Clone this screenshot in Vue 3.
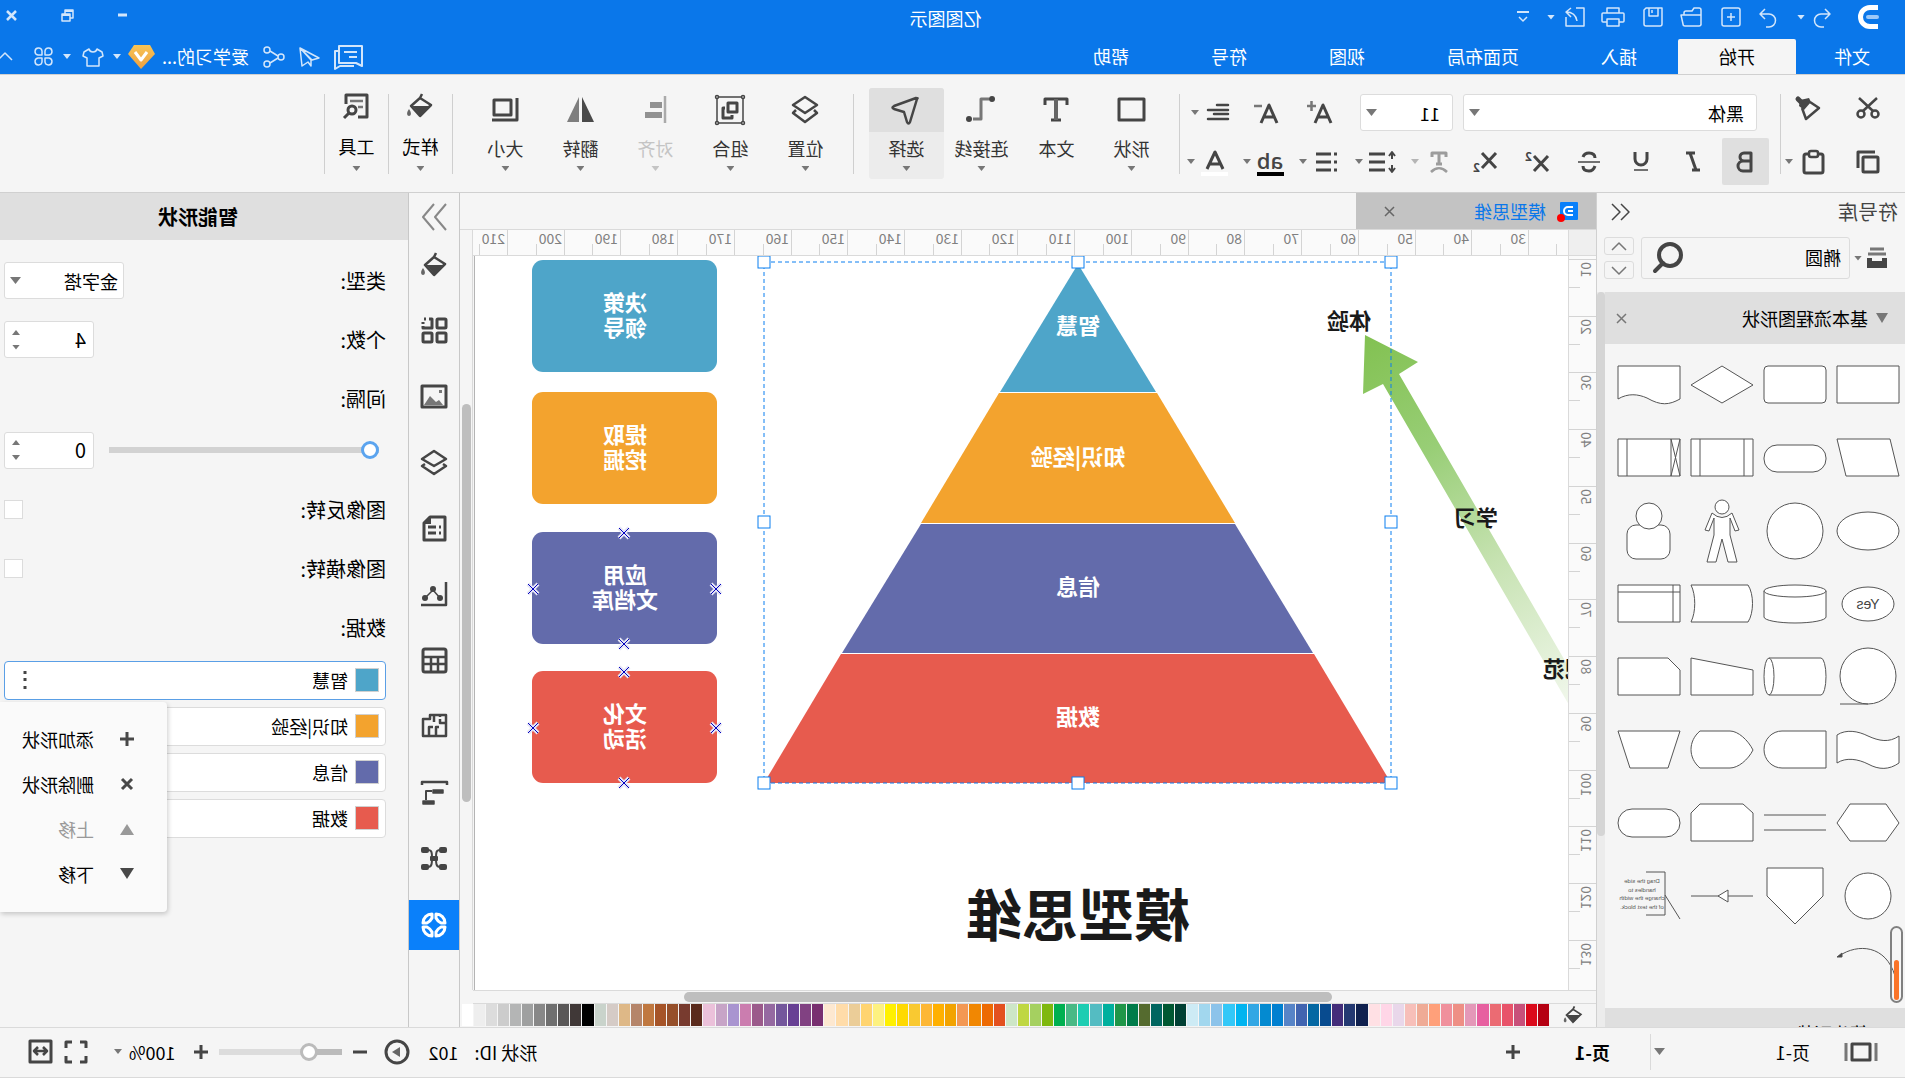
<script setup>
import { h, ref } from 'vue'

const art = {
  logo: '<path d="M2 2.500H10A9.500 9.500 0 0 1 10 21.500H2" stroke="#fff" stroke-width="5"/><path d="M3 12H12" stroke="#9cc8f8" stroke-width="4" stroke-linecap="round"/>',
  undo: '<path d="M8 3L3 8L8 13M3 8H12A6 6 0 0 1 12 21H9"/>',
  redo: '<path d="M14 3L19 8L14 13M19 8H10A6 6 0 0 0 10 21H13"/>',
  newDoc: '<rect x="2" y="2" width="18" height="18" rx="2"/><path d="M11 7V15M7 11H15"/>',
  folder: '<path d="M2 19V4A2 2 0 0 1 4 2H9L11 5H17A2 2 0 0 1 19 7V9M2 9H22L20 18A2 2 0 0 1 18 20H4A2 2 0 0 1 2 18V9"/>',
  save: '<path d="M2 2H18L20 4V18A2 2 0 0 1 18 20H4A2 2 0 0 1 2 18ZM6 2V10H15V2M12 4V7"/>',
  print: '<path d="M6 7V2H18V7M6 16H2A1 1 0 0 1 1 15V8A1 1 0 0 1 2 7H22A1 1 0 0 1 23 8V15A1 1 0 0 1 22 16H18M6 13H18V20H6Z"/>',
  share: '<path d="M10 2H2V20H20V11M15 2L20 6L15 11M20 6C14 6 10 9 9 15"/>',
  more: '<path d="M2 3H14" stroke-width="2"/><path d="M4 8L8 12L12 8"/>',
  min: '<path d="M1 3H10" stroke-width="3"/>',
  restore: '<rect x="1" y="1" width="8" height="8"/><rect x="4" y="5" width="8" height="7" fill="#0a77ea"/><path d="M4 6H12M1 2H9" stroke-width="2"/>',
  close: '<path d="M2 2L11 11M11 2L2 11" stroke-width="2.500"/>',
  comment: '<path d="M2 2H25V19H8L2 22ZM7 8H20M7 13H15" stroke-width="2"/><path d="M25 7H29V25L24 22H10" stroke-width="2"/>',
  send: '<path d="M20 2L1 12L8 14ZM20 2L9 14V20L12 16L18 20Z"/>',
  nodes: '<circle cx="4" cy="11" r="3"/><circle cx="18" cy="4" r="3"/><circle cx="18" cy="18" r="3"/><path d="M7 10L15 5M7 12L15 17"/>',
  gem: '<path d="M5 0H21L27 9L14 24L0 9Z" fill="url(#gold)" stroke="none"/><defs><linearGradient id="gold" x1="0" y1="0" x2="0" y2="1"><stop offset="0" stop-color="#f8c455"/><stop offset="1" stop-color="#eda042"/></linearGradient></defs><path d="M8 7L14 15L20 7" stroke="#fff" stroke-width="3"/>',
  shirt: '<path d="M7 2L2 5L1 9L5 11V19H17V11L21 9L20 5L15 2C14 6 8 6 7 2Z"/>',
  clover: '<path d="M9 9H5A3.500 3.500 0 1 1 9 5ZM12 9V5A3.500 3.500 0 1 1 16 9ZM9 12V16A3.500 3.500 0 1 1 5 12ZM12 12H16A3.500 3.500 0 1 1 12 16Z"/>',
  up: '<path d="M1 9L8 2L15 9"/>',
  scissors: '<g stroke-width="2.500"><circle cx="6" cy="19" r="3.500"/><circle cx="20" cy="19" r="3.500"/><path d="M8 16L22 3M18 16L4 3"/></g>',
  painter: '<path d="M23 4L19 8" stroke-width="5" stroke-linecap="round"/><path d="M12 3L21 5L22 11L17 15L10 7Z" fill="currentColor" stroke="none"/><path d="M11 7L2 13L15 24L19 13" stroke-width="2.500"/>',
  copy: '<rect x="3" y="8" width="15" height="15" stroke-width="3" rx="1"/><path d="M6 3H23V19" stroke-width="3"/>',
  paste: '<rect x="3" y="5" width="19" height="19" rx="2" stroke-width="3"/><rect x="8" y="2" width="9" height="6" rx="2" stroke-width="2.500" fill="#f5f5f5"/>',
  aPlus: '<path d="M3 24L11 6L19 24M6 18H16" stroke-width="3"/><path d="M18 7H27M22.500 2V12" stroke="#777" stroke-width="2.500"/>',
  aMinus: '<path d="M3 24L11 6L19 24M6 18H16" stroke-width="3"/><path d="M18 7H26" stroke="#777" stroke-width="2.500"/>',
  align: '<path d="M4 5H15M4 10H24M4 14H18M4 19H24" stroke-width="2.500" stroke-linecap="round"/>',
  bold: '<path d="M7 4H14A4 4 0 0 1 14 12H7ZM7 12H15A4.500 4.500 0 0 1 15 22H7Z" stroke-width="3"/>',
  italic: '<path d="M11 4H20M6 21H14M16 4L10 21" stroke-width="3"/>',
  under: '<path d="M7 3V10A6 6 0 0 0 19 10V3" stroke-width="3"/><path d="M6 21H20" stroke-width="1.500"/>',
  strike: '<path d="M19 8C18 5 16 4 13 4C9 4 7 6 7 9M7 17C8 20 10 22 13 22C17 22 19 20 19 17" stroke-width="3"/><path d="M2 13H24"/>',
  sup: '<path d="M2 7L16 22M16 7L2 22" stroke-width="3"/><text x="18" y="12" font-size="12" font-weight="700" fill="currentColor" stroke="none">2</text>',
  sub: '<path d="M2 4L16 19M16 4L2 19" stroke-width="3"/><text x="18" y="23" font-size="12" font-weight="700" fill="currentColor" stroke="none">2</text>',
  textArc: '<path d="M5 8V4H19V8M12 4V15M9 15H15" stroke-width="3"/><path d="M4 23C9 18 15 18 20 23" stroke-width="2.500"/>',
  spacing: '<path d="M5 4V10M2 7L5 3L8 7M5 16V23M2 19L5 23L8 19" stroke-width="2"/><path d="M12 5H28M12 13H28M12 21H28" stroke-width="3"/>',
  bullets: '<path d="M2 5H5M2 13H5M2 21H5M8 5H23M8 13H23M8 21H23" stroke-width="3"/>',
  mark: '<text x="15" y="20" text-anchor="middle" font-size="22" font-weight="600" fill="currentColor" stroke="none" font-family="Open Sans">ab</text><path d="M1 25H28" stroke="#000" stroke-width="4"/>',
  color: '<path d="M6 20L14 3L22 20M9 15H19" stroke-width="3"/><path d="M1 25H28" stroke="#fff" stroke-width="4"/>',
  shape: '<rect x="2" y="4" width="25" height="21" stroke-width="3"/>',
  text: '<path d="M4 10V4H26V10M10 25H20" stroke-width="3"/><path d="M15 4V25" stroke-width="4" stroke="#666"/>',
  line: '<path d="M7 4H15V24H23" stroke-width="3" stroke="#777"/><circle cx="4" cy="4" r="3" fill="currentColor" stroke="none"/><circle cx="27" cy="24" r="3" fill="currentColor" stroke="none"/>',
  pick: '<path d="M4 4C3 3 3 3 5 3L27 11C29 12 29 13 27 14L17 17L14 27C13 29 12 29 11 27Z" stroke-width="2.500"/>',
  layers: '<path d="M15 2L27 10L15 18L3 10ZM6 15L3 18L15 27L27 18L24 15" stroke-width="2.500"/>',
  stack: '<path d="M14 2L26 10L14 17L2 10ZM5 15L2 17L14 25L26 17L23 15" stroke-width="2.500"/>',
  group: '<rect x="2" y="2" width="26" height="26" stroke-width="1.500"/><g fill="#f5f5f5" stroke-width="1.500"><circle cx="2" cy="2" r="1.500"/><circle cx="28" cy="2" r="1.500"/><circle cx="2" cy="28" r="1.500"/><circle cx="28" cy="28" r="1.500"/></g><rect x="8" y="8" width="9" height="9" stroke-width="3"/><path d="M20 13H22V23H13V20" stroke-width="3"/>',
  arrange: '<path d="M5 1V28" stroke-width="2.500" stroke="#aaa"/><path d="M8 7H20V13H8ZM8 17H25V23H8Z" fill="#919191" stroke="none"/>',
  flip: '<path d="M1 27L13 2V27Z" fill="#4a4a4a" stroke="none"/><path d="M16 2V27H28Z" fill="#7e7e7e" stroke="none"/>',
  size: '<rect x="9" y="5" width="17" height="15" stroke-width="3"/><path d="M3 3V25H28" stroke-width="3"/>',
  bucket: '<path d="M12 2L14 6M14 6L23 14L14 24L3 13Z" stroke-width="2.500"/><path d="M4 14H22L13 24Z" fill="currentColor" stroke="none"/><path d="M25 17C28 21 27 24 25 24S22 21 25 17" fill="#666" stroke="none"/>',
  tools: '<path d="M12 25H3V3H24V12" stroke-width="3"/><path d="M7 9H20M7 15H12" stroke-width="2.500" stroke="#777"/><circle cx="18" cy="18" r="4" stroke-width="3"/><path d="M21 21L26 26" stroke-width="3"/>',
  tiles: '<g stroke-width="3"><rect x="2" y="2" width="9" height="9" rx="1"/><rect x="2" y="16" width="9" height="9" rx="1"/><rect x="16" y="16" width="9" height="9" rx="1"/><path d="M19 2H16V11H25V9M25 5V7M22 2H24"/></g>',
  image: '<rect x="2" y="3" width="24" height="21" stroke-width="3"/><path d="M5 22L9 17L12 19L18 13L24 22Z" fill="#777" stroke="none"/><rect x="6" y="7" width="3" height="3" fill="#777" stroke="none"/>',
  doc: '<path d="M3 2H18L24 8V25H3Z" stroke-width="3"/><path d="M17 2V9H24Z" fill="currentColor" stroke="none"/><path d="M7 12H9M12 12H20M7 18H9M12 18H20" stroke-width="3"/>',
  chart: '<path d="M2 1V24H27" stroke-width="2.500"/><path d="M8 17L15 9L23 17" /><g fill="currentColor" stroke="none"><circle cx="8" cy="17" r="3"/><circle cx="15" cy="8" r="3"/><circle cx="23" cy="17" r="3"/></g>',
  table: '<rect x="2" y="2" width="23" height="23" rx="2" stroke-width="3"/><path d="M2 10H25M2 17H25M10 10V25M17 10V25" stroke-width="2.500"/>',
  plan: '<path d="M2 2H18V6H25V23H2ZM2 10H8V6M8 2V4M14 2V9M9 14H12V23M15 14H19V18M19 18V23" stroke-width="2.500"/>',
  gantt: '<path d="M1 6V3H26V6" stroke-width="2.500"/><path d="M5 11H15V14H5ZM14 22H25V25H14Z" fill="currentColor"/><path d="M16 12H22V21" stroke-width="2"/>',
  mind: '<g fill="currentColor" stroke="none"><rect x="1" y="2" width="8" height="6" rx="2"/><rect x="19" y="2" width="8" height="6" rx="2"/><rect x="1" y="19" width="8" height="6" rx="2"/><rect x="19" y="19" width="8" height="6" rx="2"/><rect x="10" y="11" width="8" height="5" rx="1"/></g><path d="M8 5C12 5 12 8 12 13S12 22 8 22M20 5C16 5 16 8 16 13S16 22 20 22" stroke-width="2"/>',
  wheel: '<g stroke="#fff" stroke-width="3"><path d="M12 3V7C11 9 9 11 7 12H3C3 7 7 3 12 3ZM16 3V7C17 9 19 11 21 12H25C25 7 21 3 16 3ZM12 25V21C11 19 9 17 7 16H3C3 21 7 25 12 25ZM16 25V21C17 19 19 17 21 16H25C25 21 21 25 16 25Z"/></g>',
  collapse: '<path d="M9 2L1 10L9 18M18 2L10 10L18 18" stroke-width="1.500"/>',
  expand: '<path d="M2 1L13 14L2 27M14 1L25 14L14 27" stroke-width="2"/>',
  library: '<path d="M1 12H6V15H16V12H21V22H1Z" fill="currentColor" stroke="none"/><path d="M2 8H20M4 3H18" stroke="#777" stroke-width="3"/>',
  find: '<circle cx="14" cy="14" r="11" stroke-width="4"/><path d="M21 22L29 30" stroke-width="4" stroke-linecap="round"/>',
  chevUp: '<path d="M2 10L9 3L16 10" stroke-width="1.500"/>',
  chevDown: '<path d="M2 3L9 10L16 3" stroke-width="1.500"/>',
  cross: '<path d="M1 1L10 10M10 1L1 10" stroke-width="1.500"/>',
  tabLogo: '<rect x="0" y="2" width="18" height="18" rx="1" fill="#0a80fa" stroke="none"/><path d="M5 7H10A4 4 0 0 1 10 15H5M5 11H10" stroke="#fff" stroke-width="2"/><circle cx="17" cy="18" r="4" fill="#f00" stroke="none"/>',
  add: '<path d="M8 1V15M1 8H15" stroke-width="3"/>',
  remove: '<path d="M1 8H15" stroke-width="3"/>',
  del: '<path d="M3 3L13 13M13 3L3 13" stroke-width="3"/>',
  triUp: '<path d="M8 3L15 14H1Z" fill="currentColor" stroke="none"/>',
  triDown: '<path d="M1 2H15L8 13Z" fill="currentColor" stroke="none"/>',
  dots: '<path d="M3 2V5M3 9V12M3 17V20" stroke-width="3"/>',
  pages: '<rect x="8" y="2" width="18" height="16" stroke-width="3"/><path d="M2 1V19M32 1V19" stroke="#777" stroke-width="3"/>',
  play: '<circle cx="13" cy="13" r="11" stroke-width="3"/><path d="M10 8V18L18 13Z" fill="#666" stroke="none"/>',
  full: '<path d="M2 8V2H8M16 2H22V8M22 16V22H16M8 22H2V16" stroke-width="3"/>',
  fit: '<rect x="2" y="2" width="21" height="21" stroke-width="3"/><path d="M6 12H19M10 8L6 12L10 16M15 8L19 12L15 16" stroke-width="2.500"/>'
}
const Icon = (p) => h('svg', {
  viewBox: `0 0 ${p.w || 26} ${p.h || p.w || 26}`, width: p.w || 26, height: p.h || p.w || 26,
  fill: 'none', stroke: 'currentColor', 'stroke-width': 1.5, 'stroke-linejoin': 'round',
  overflow: 'visible', 'aria-hidden': 'true', innerHTML: art[p.n]
})
Icon.props = ['n', 'w', 'h']

const tabs = ['文件', '开始', '插入', '页面布局', '视图', '符号', '帮助']
const formats = [['bold', '加粗'], ['italic', '斜体'], ['under', '下划线'], ['strike', '删除线'], ['sup', '上标'], ['sub', '下标']]
const dropFormats = [['textArc', 24, '艺术字'], ['spacing', 29, '行距'], ['bullets', 25, '列表'], ['mark', 29, '突出显示'], ['color', 29, '字体颜色']]
const drawTools = [['shape', '形状'], ['text', '文本'], ['line', '连接线'], ['pick', '选择']]
const layoutTools = [['layers', '位置'], ['group', '组合'], ['arrange', '对齐'], ['flip', '翻转'], ['size', '大小']]
const rail = ['bucket', 'tiles', 'image', 'stack', 'doc', 'chart', 'table', 'plan', 'gantt', 'mind', 'wheel']

const shapes = [
  '<path d="M5 18H67V55H5Z"/>',
  '<rect x="5" y="18" width="62" height="37" rx="4"/>',
  '<path d="M36 18L67 37L36 55L5 37Z"/>',
  '<path d="M5 18H67V51C57 45 47 46 38 50C24 58 16 57 5 51Z"/>',
  '<path d="M14 18H67L58 55H5Z"/>',
  '<rect x="5" y="24" width="62" height="27" rx="13"/>',
  '<path d="M5 18H67V55H5ZM14 18V55M58 18V55"/>',
  '<path d="M5 18H67V55H5ZM14 18V55M58 18V55M5 18L14 55M14 18L5 55"/>',
  '<ellipse cx="36" cy="37" rx="31" ry="19"/>',
  '<circle cx="36" cy="37" r="28"/>',
  '<circle cx="36" cy="13" r="7"/><path d="M26 19L19 36L23 37L28 24V41L21 68H30L36 45L42 68H51L44 41V24L49 37L53 36L46 19Q36 28 26 19Z"/>',
  '<rect x="15" y="31" width="43" height="34" rx="9"/><circle cx="36" cy="22" r="13"/>',
  '<ellipse cx="36" cy="37" rx="26" ry="17"/><text x="36" y="42" text-anchor="middle" font-size="14" fill="#444" stroke="none">Yes</text>',
  '<path d="M5 24V50A31 6 0 0 0 67 50V24"/><ellipse cx="36" cy="24" rx="31" ry="6"/>',
  '<path d="M10 18H67C62 28 62 45 67 55H10C4 46 4 27 10 18Z"/>',
  '<path d="M5 18H67V55H5ZM5 25H67M12 18V55"/>',
  '<circle cx="36" cy="36" r="28"/><path d="M36 64H64"/>',
  '<path d="M62 18H10A5 18.500 0 0 0 10 55H62"/><ellipse cx="62" cy="36.500" rx="5" ry="18.500"/>',
  '<path d="M5 30L67 18V55H5Z"/>',
  '<path d="M17 18H67V55H5V30Z"/>',
  '<path d="M5 23C15 30 25 28 36 23C46 18 58 16 67 22V50C58 44 46 46 36 51C25 57 15 57 5 50Z"/>',
  '<path d="M5 18H49A18 18.500 0 0 1 49 55H5Z"/>',
  '<path d="M58 18C70 28 70 45 58 55H28C20 55 10 47 5 37C10 27 20 18 28 18Z"/>',
  '<path d="M5 18H67L55 55H17Z"/>',
  '<path d="M5 37L18 18H54L67 37L54 55H18Z"/>',
  '<path d="M5 29H67M5 44H67"/>',
  '<path d="M15 18H58L67 27V55H5V27Z"/>',
  '<rect x="5" y="23" width="62" height="28" rx="14"/>',
  '<circle cx="36" cy="37" r="23"/>',
  '<path d="M8 9H64V37L36 65L8 37Z"/>',
  '<path d="M5 37H67"/><path d="M30 31V43L40 37Z"/>',
  '<path d="M39 13H20V56H39M20 36L5 60" fill="none"/><g font-size="6" text-anchor="middle" fill="#555" stroke="none"><text x="43" y="24">Drag the side</text><text x="43" y="33">handles to</text><text x="43" y="41">change the width</text><text x="43" y="50">of the text block.</text></g>',
  '<path d="M65 24C46 11 18 13 9 44" fill="none"/><path d="M67 25L62 21L62 25Z" fill="#444"/>'
]

const swatches = ('b50012 db0a1b c8507a e8536a eb6b73 e760a0 e498b8 ee8f85 f0909c ffa07a efab96 f7bfb9 e9d7ea ffd6e7 ffe0e4 ' +
  '10214f 243972 442d7a 084b8f 0468a3 4164b0 5784c7 0080d0 048ad0 32a7e4 00b4f0 33c8f8 8cc3ea a2d7ee cdebf5 ' +
  '004034 005832 006660 556b2f 007c4a 1f9648 00b09e 54bcc2 1dcdb2 49b985 00b050 7fb80e a5d060 bfd742 cde6c7 ' +
  'e3501f ed6a02 f18702 f39853 f2a300 ffb000 fdb735 f9c931 ffd900 fff000 fdf180 ffd470 ebcd98 ffdca9 fde8d0 ' +
  '782f70 814182 684094 74579c 9569a1 9b5a8b cb7daf a994d0 c7a4c7 ebc1da 5a2a1c 783b2f 964f2a a65428 c07840 b5856a deb887 d5cbc6 c9d3cb ' +
  '000000 403837 595757 6f6f6f 888888 9fa0a0 b4b5b5 cccccc dcdcdc eeeeee ffffff').split(' ').map(c => '#' + c)

const unit = 1021 / 18
const topTicks = Array.from({ length: 19 }, (_, i) => ({ n: 30 + i * 10, at: Math.round(39 + i * unit) }))
const sideTicks = Array.from({ length: 13 }, (_, i) => ({ n: 10 + i * 10, at: Math.round(3 + i * unit) }))
const half = Math.round(unit / 2)

const colors = ['#4ea5c9', '#f3a32e', '#636bab', '#e75b4e']
const bands = [
  { t: '智慧', y: 334, p: '827,264 749,392 905,392' },
  { t: '知识|经验', y: 465, p: '748,393 906,393 984,523 670,523' },
  { t: '信息', y: 595, p: '670,524 984,524 1063,653 592,653' },
  { t: '数据', y: 725, p: '591,654 1064,654 1141,783 514,783' }
]
const boxes = [
  { a: '决策', b: '领导', y: 260 }, { a: '提取', b: '挖掘', y: 392 },
  { a: '应用', b: '文档库', y: 532, marks: true }, { a: '文化', b: '活动', y: 671, marks: true }
]
const handles = [[514, 262], [827, 262], [1141, 262], [514, 522], [1141, 522], [514, 783], [827, 783], [1141, 783]]
const marksOf = (y) => [[1281, y + 1], [1281, y + 112], [1189, y + 57], [1372, y + 57]]
const rows = ['智慧', '知识|经验', '信息', '数据']
const menu = [['add', '添加形状'], ['del', '删除形状'], ['triUp', '上移'], ['triDown', '下移']]
const query = ref('椭圆'), count = ref('4'), gapValue = ref('0')
</script>

<template>
  <div class="app">
    <header>
      <div class="titlebar">
        <div class="quick">
          <Icon n="logo" class="logo" w="24" />
          <button aria-label="撤销"><Icon n="undo" w="22" /></button><i class="caret" />
          <button class="redo" aria-label="重做"><Icon n="redo" w="22" /></button>
          <button v-for="n in ['newDoc', 'folder', 'save', 'print', 'share']" :key="n" class="quick-btn" :aria-label="n"><Icon :n="n" w="24" h="22" /></button>
          <i class="caret" />
          <button class="more" aria-label="更多"><Icon n="more" w="16" /></button>
        </div>
        <h1>亿图图示</h1>
        <div class="window">
          <button aria-label="最小化"><Icon n="min" w="11" h="6" /></button>
          <button aria-label="还原"><Icon n="restore" w="13" /></button>
          <button aria-label="关闭"><Icon n="close" w="13" /></button>
        </div>
      </div>
      <nav>
        <a v-for="(t, i) in tabs" :key="t" href="#" :class="{ first: i === 0, active: i === 1 }">{{ t }}</a>
        <div class="account">
          <button aria-label="评论"><Icon n="comment" w="30" h="26" /></button>
          <button aria-label="发送"><Icon n="send" w="21" /></button>
          <button aria-label="分享"><Icon n="nodes" w="22" /></button>
          <a class="user" href="#">爱学习的...</a>
          <Icon n="gem" w="27" h="24" /><i class="caret" />
          <button aria-label="主题"><Icon n="shirt" w="22" h="20" /></button><i class="caret" />
          <button aria-label="应用"><Icon n="clover" w="21" /></button>
          <button class="fold" aria-label="收起"><Icon n="up" w="16" h="11" /></button>
        </div>
      </nav>
    </header>

    <section class="ribbon">
      <div class="clip">
        <div class="line one">
          <button class="tool" aria-label="剪切"><Icon n="scissors" /></button>
          <button class="tool push" aria-label="格式刷"><Icon n="painter" /></button>
        </div>
        <div class="line two">
          <button class="tool" aria-label="复制"><Icon n="copy" /></button>
          <button class="tool drop near" aria-label="粘贴"><Icon n="paste" /><i class="caret" /></button>
        </div>
      </div>
      <div class="rule" />
      <div class="font">
        <div class="line one">
          <label class="select family"><select aria-label="字体"><option>黑体</option></select><i class="caret big" /></label>
          <label class="select points"><select aria-label="字号"><option>11</option></select><i class="caret big" /></label>
          <button class="tool grow" aria-label="增大"><Icon n="aPlus" w="28" /></button>
          <button class="tool wide" aria-label="减小"><Icon n="aMinus" w="28" /></button>
          <button class="tool drop" aria-label="对齐方式"><Icon n="align" /><i class="caret" /></button>
        </div>
        <div class="line two">
          <button v-for="([n, l], i) in formats" :key="n" class="tool format" :class="{ on: i === 0 }" :aria-label="l"><Icon :n="n" /></button>
          <button v-for="([n, w, l], i) in dropFormats" :key="n" class="tool drop spaced" :class="{ faded: i === 0 }" :aria-label="l"><Icon :n="n" :w="w" h="26" /><i class="caret" /></button>
        </div>
      </div>
      <div class="rule" />
      <div class="tools">
        <button v-for="[n, t] in drawTools" :key="n" class="large" :class="{ chosen: n === 'pick' }">
          <span class="pic"><Icon :n="n" w="30" /></span><span>{{ t }}</span><i v-if="n !== 'text'" class="caret" />
        </button>
      </div>
      <div class="rule" />
      <div class="tools">
        <button v-for="[n, t] in layoutTools" :key="n" class="large" :class="{ off: n === 'arrange' }" :disabled="n === 'arrange'">
          <span class="pic"><Icon :n="n" w="30" /></span><span>{{ t }}</span><i class="caret" />
        </button>
      </div>
      <div class="rule" />
      <button class="large tight"><span class="pic"><Icon n="bucket" w="28" /></span><span>样式</span><i class="caret" /></button>
      <div class="rule" />
      <button class="large tight"><span class="pic"><Icon n="tools" w="28" /></span><span>工具</span><i class="caret" /></button>
      <div class="rule" />
    </section>

    <main>
      <aside class="symbols">
        <div class="sym-head"><h2>符号库</h2><button aria-label="收起"><Icon n="collapse" w="20" /></button></div>
        <div class="sym-search">
          <button class="lib" aria-label="符号库"><Icon n="library" w="22" h="24" /><i class="caret" /></button>
          <label class="search"><input v-model="query" aria-label="搜索符号"><Icon n="find" w="32" /></label>
          <div class="steps">
            <button aria-label="上一个"><Icon n="chevUp" w="18" h="13" /></button>
            <button aria-label="下一个"><Icon n="chevDown" w="18" h="13" /></button>
          </div>
        </div>
        <div class="sym-body">
          <div class="sym-list">
            <div class="sym-title"><i class="caret huge" /><h3>基本流程图形状</h3><button aria-label="关闭"><Icon n="cross" w="11" /></button></div>
            <div class="grid"><svg v-for="(s, i) in shapes" :key="i" width="73" height="73" v-html="s" /></div>
            <div class="gauge"><i /></div>
            <div class="sym-title next"><h3>箭头形状</h3></div>
          </div>
          <div class="sym-track"><i /></div>
        </div>
      </aside>

      <section class="work">
        <div class="doc-tabs"><div class="doc-tab"><Icon n="tabLogo" w="21" h="22" /><span>模型思维</span><button aria-label="关闭"><Icon n="cross" w="11" /></button></div></div>
        <div class="sheet">
          <div class="corner" />
          <svg class="ruler-x">
            <g v-for="t in topTicks" :key="t.n">
              <path :d="`M${t.at}.5 0V25M${t.at + half}.5 14V25`" />
              <text :x="t.at + 3" y="14">{{ t.n }}</text>
            </g>
            <path :d="`M${39 - half}.5 14V25`" />
          </svg>
          <div class="track-y"><i /></div>
          <svg class="ruler-y">
            <g v-for="t in sideTicks" :key="t.n">
              <path :d="`M0 ${t.at}.5H27M16 ${t.at + half}.5H27`" />
              <text :transform="`translate(15 ${t.at + 3}) rotate(-90)`" text-anchor="end">{{ t.n }}</text>
            </g>
          </svg>
          <div class="canvas">
            <svg class="drawing">
              <defs>
                <linearGradient id="trail" gradientUnits="userSpaceOnUse" x1="540" y1="335" x2="330" y2="715">
                  <stop offset="0" stop-color="#82c151" /><stop offset=".3" stop-color="#98ce76" /><stop offset=".6" stop-color="#c6e2b1" /><stop offset="1" stop-color="#f4f9f0" />
                </linearGradient>
              </defs>
              <g transform="translate(-337 -256)">
                <path d="M540 335L487 362L506 374L300 730V767L522 384L542 394Z" fill="url(#trail)" />
                <g class="ink"><text x="556" y="329">体验</text><text x="429" y="526">学习</text><text x="340" y="677">规范</text></g>
                <g v-for="(b, i) in bands" :key="b.t">
                  <polygon :points="b.p" :fill="colors[i]" /><text class="white" x="827" :y="b.y">{{ b.t }}</text>
                </g>
                <rect class="frame" x="514" y="262" width="627" height="521" />
                <rect v-for="([x, y], i) in handles" :key="i" class="handle" :x="x - 6" :y="y - 6" width="12" height="12" />
                <g v-for="(b, i) in boxes" :key="b.a">
                  <rect x="1188" :y="b.y" width="185" height="112" rx="11" :fill="colors[i]" />
                  <text class="white" x="1280" :y="b.y + 51">{{ b.a }}</text>
                  <text class="white" x="1280" :y="b.y + 76">{{ b.b }}</text>
                  <template v-if="b.marks">
                    <g v-for="([x, y], k) in marksOf(b.y)" :key="k">
                      <path :d="`M${x - 5} ${y - 5}l10 10m0 -10l-10 10`" stroke="#e4e4f4" stroke-width="4" />
                      <path :d="`M${x - 5} ${y - 5}l10 10m0 -10l-10 10`" stroke="#0000c0" stroke-width="1" />
                    </g>
                  </template>
                </g>
                <text class="headline" x="827" y="936">模型思维</text>
              </g>
            </svg>
          </div>
        </div>
        <div class="track-x"><i /></div>
        <div class="palette">
          <button class="fill" aria-label="填充"><svg viewBox="0 0 28 28" width="20" height="20" fill="none" stroke="currentColor" v-html="art.bucket" /></button>
          <button v-for="(c, i) in swatches" :key="i" class="chip" :style="{ background: c }" :aria-label="c" />
        </div>
      </section>

      <nav class="rail">
        <button class="expand" aria-label="展开"><Icon n="expand" w="28" /></button>
        <button v-for="n in rail" :key="n" :class="{ active: n === 'wheel' }" :aria-label="n"><Icon :n="n" w="28" /></button>
      </nav>

      <aside class="props">
        <h2>智能形状</h2>
        <div class="fields">
          <div class="field"><label for="kind">类型:</label><div class="select kind"><select id="kind"><option>金字塔</option></select><i class="caret big" /></div></div>
          <div class="field"><label for="count">个数:</label><div class="spin"><input id="count" v-model="count"><span><button aria-label="增加"><i class="caret flip" /></button><button aria-label="减少"><i class="caret" /></button></span></div></div>
          <div class="field"><label for="gap">间隔:</label></div>
          <div class="field slide"><input id="gap" type="range" min="0" max="100" value="0"><div class="spin"><input v-model="gapValue" aria-label="间隔值"><span><button aria-label="增加"><i class="caret flip" /></button><button aria-label="减少"><i class="caret" /></button></span></div></div>
          <div class="field"><label for="fx">图像反转:</label><input id="fx" type="checkbox"></div>
          <div class="field"><label for="fy">图像横转:</label><input id="fy" type="checkbox"></div>
          <div class="field"><span>数据:</span></div>
          <ul>
            <li v-for="(r, i) in rows" :key="r" :class="{ current: i === 0 }">
              <i :style="{ background: colors[i] }" /><span>{{ r }}</span>
              <button v-if="i === 0" aria-label="更多"><Icon n="dots" w="6" h="22" /></button>
            </li>
          </ul>
          <div class="menu">
            <button v-for="[n, t] in menu" :key="n" :disabled="n === 'triUp'"><Icon :n="n" w="16" /><span>{{ t }}</span></button>
          </div>
        </div>
      </aside>
    </main>

    <footer>
      <div class="page-pick"><Icon n="pages" w="34" h="20" /><span>页-1</span><i class="caret big" /></div>
      <b>页-1</b>
      <button class="new-page" aria-label="新建页"><Icon n="add" w="16" /></button>
      <div class="status">
        <span>形状 ID:</span><span>102</span>
      </div>
      <button class="show" aria-label="演示"><Icon n="play" /></button>
      <button class="less" aria-label="缩小"><Icon n="remove" w="16" /></button>
      <input class="zoom" type="range" min="0" max="100" value="22" aria-label="缩放">
      <button class="plus" aria-label="放大"><Icon n="add" w="16" /></button>
      <span>100%</span><i class="caret" />
      <button class="full" aria-label="全屏"><Icon n="full" w="24" /></button>
      <button class="fit" aria-label="适应宽度"><Icon n="fit" w="25" /></button>
    </footer>
  </div>
</template>

<style>
body { overflow: hidden; background: #f5f5f5; }
</style>

<style scoped>
* { box-sizing: border-box; }
.app { display: flex; flex-direction: column; min-height: 100vh; font: 18px/28px "Noto Sans CJK SC", "Noto Sans", sans-serif; color: #000; background: #f5f5f5; transform: scaleX(-1); }
button, input, select { font: inherit; color: inherit; }
button { display: inline-flex; align-items: center; justify-content: center; padding: 0; border: 0; background: none; }
a { color: inherit; text-decoration: none; }
h1, h2, h3 { margin: 0; font-size: 18px; font-weight: 400; }
svg { display: block; flex: none; }
.caret { display: block; flex: none; width: 8px; height: 5px; background: #777; clip-path: polygon(0 0, 100% 0, 50% 100%); }
.caret.big { width: 11px; height: 7px; }
.caret.huge { width: 12px; height: 10px; }
.caret.flip { transform: scaleY(-1); }

header { color: #fff; background: #0a77ea; border-bottom: 1px solid #d0d0d0; }
header button { color: #d3e6fb; }
header .caret { background: #d3e6fb; }
.titlebar { display: flex; align-items: flex-start; height: 39px; }
.quick, .window { display: flex; flex: 1; align-items: center; height: 34px; }
.quick { padding-left: 25px; }
.logo { margin-right: 23px; }
.quick > .caret { margin-left: 6px; }
.redo { margin: 0 7px 0 18px; }
.quick-btn { width: 39px; }
.quick-btn + .caret { margin-left: 0; }
.more { margin-left: 16px; }
.titlebar h1 { padding-right: 6px; line-height: 36px; }
.window { justify-content: flex-end; gap: 43px; padding: 0 5px 4px 0; }
header nav { display: flex; height: 35px; }
header nav > a { padding: 0 41px; line-height: 35px; white-space: nowrap; }
header nav > a.first { padding: 0 38px 0 35px; }
header nav > a.active { color: #000; background: #f5f5f5; border-radius: 2px 2px 0 0; }
.account { display: flex; align-items: center; margin-left: auto; }
.account > button { margin-right: 14px; }
.account .user { width: 94px; line-height: 35px; white-space: nowrap; }
.account .caret { margin: 0 9px 0 7px; }
.account > button:has(+ .caret) { margin-right: 4px; }
.account > .fold { margin: 0 -3px 0 6px; }

.ribbon { display: flex; height: 118px; border-bottom: 1px solid #d0d0d0; color: #454545; white-space: nowrap; }
.rule { flex: none; width: 1px; height: 80px; margin-top: 19px; background: #cfcfcf; }
.line { display: flex; align-items: center; }
.line.one { height: 37px; }
.line.two { height: 47px; }
.clip { display: flex; flex-direction: column; gap: 12px; width: 124px; padding: 14px 0 0 17px; }
.tool { flex: none; width: 40px; height: 100%; }
.tool.push { margin-left: 20px; }
.tool.near { margin-left: 15px; }
.tool.drop { display: grid; grid-template-columns: 40px 8px; width: 48px; justify-items: center; }
.font { display: flex; flex-direction: column; gap: 7px; width: 600px; padding: 19px 0 0 11px; color: #454545; }
.tool.format { width: 52px; }
.tool.format.on { width: 47px; margin-right: 3px; background: #dfdfdf; border-radius: 2px; }
.tool.spaced { margin-right: 8px; }
.tool.faded { opacity: .5; }
.tool.wide, .tool.grow { width: 54px; }
.tool.grow { margin-left: 13px; }
.select { position: relative; display: block; height: 37px; border: 1px solid #dcdcdc; border-radius: 3px; background: #fff; color: #000; }
.select select { width: 100%; height: 100%; padding: 0 12px; border: 0; background: none; appearance: none; outline: 0; }
.select .caret { position: absolute; top: 14px; right: 5px; pointer-events: none; }
.family { width: 294px; margin: 0 10px 0 12px; }
.points { width: 93px; }
.tools { display: flex; padding: 0 15px 0 10px; }
.large { flex: none; flex-direction: column; justify-content: flex-start; width: 75px; height: 91px; margin-top: 13px; color: #333; border-radius: 3px; }
.large .pic { display: flex; align-items: center; justify-content: center; width: 100%; height: 44px; color: #454545; }
.large .pic + span { margin-top: 2px; }
.large .caret { margin-top: 4px; }
.large.chosen { background: #ececec; }
.large.chosen .pic { background: #dfdfdf; border-radius: 3px 3px 0 0; }
.large.off { color: #c4c4c4; }
.large.off .caret { background: #c4c4c4; }
.large.tight { width: 63px; color: #000; }
.large.tight .pic { height: 36px; }
.large.tight .pic + span { margin-top: 8px; }
.large.tight .caret { margin-top: 6px; }

main { display: flex; flex: 1; min-height: 0; }
.symbols { display: flex; flex-direction: column; flex: none; width: 309px; border-right: 1px solid #d0d0d0; }
.sym-head { display: flex; justify-content: space-between; align-items: center; height: 38px; padding: 0 13px 0 7px; color: #444; }
.sym-head h2 { font-size: 20px; }
.sym-search { display: flex; padding: 6px 0 13px 17px; height: 61px; }
.lib { gap: 4px; margin-right: 4px; color: #454545; }
.search { display: flex; align-items: center; width: 209px; margin-right: 7px; padding: 0 10px 2px 8px; border: 1px solid #dcdcdc; border-radius: 3px; color: #454545; }
.search input { flex: 1; min-width: 0; padding: 0; border: 0; outline: 0; background: none; color: #000; }
.steps { display: flex; flex-direction: column; justify-content: space-between; }
.steps button { width: 30px; height: 18px; border: 1px solid #dcdcdc; border-radius: 3px; color: #777; }
.sym-body { display: flex; flex: 1; min-height: 0; }
.sym-list { position: relative; display: flex; flex-direction: column; width: 300px; }
.sym-title { display: flex; align-items: center; flex: none; height: 52px; padding: 0 11px 0 17px; background: #dfdfdf; color: #777; }
.sym-title h3 { margin: 0 auto 0 8px; color: #000; }
.sym-title.next { align-items: flex-start; height: 19px; margin-top: 3px; padding: 11px 0 0 29px; overflow: hidden; }
.grid { display: grid; grid-template-columns: repeat(4, 73px); padding: 4px 0 0 1px; }
.grid svg { fill: #fff; stroke: #555; stroke-width: 1; font-family: "Liberation Sans", sans-serif; overflow: visible; }
.gauge { position: absolute; left: 2px; bottom: 24px; display: flex; align-items: flex-end; width: 13px; height: 77px; padding: 1px 2px; border: 2px solid #808080; border-radius: 7px; }
.gauge i { width: 5px; height: 40px; border-radius: 3px; background: #fa7428; }
.sym-track { width: 8px; background: #ececec; }
.sym-track i { display: block; height: 74%; border-radius: 4px; background: #d5d5d5; }

.work { display: flex; flex-direction: column; flex: 1; min-width: 0; }
.doc-tabs { height: 37px; border-bottom: 1px solid #dadada; }
.doc-tab { display: flex; align-items: center; gap: 11px; width: 240px; height: 36px; padding: 0 28px 0 18px; background: #c3c3c3; color: #0a77ea; }
.doc-tab button { margin-left: auto; color: #666; }
.sheet { display: grid; grid-template-columns: 28px 1fr 13px; grid-template-rows: 26px 1fr; flex: 1; min-height: 0; }
.corner { background: #efefef; border: solid #dadada; border-width: 0 1px 1px 0; }
.ruler-x, .ruler-y { width: 100%; height: 100%; background: #fafafa; stroke: #d4d4d4; font-size: 14px; overflow: hidden; }
.ruler-x { border-bottom: 1px solid #dadada; }
.ruler-y { border-right: 1px solid #dadada; }
.ruler-x text, .ruler-y text { fill: #808080; stroke: none; }
.track-y { grid-row: 1 / 3; grid-column: 3; padding: 174px 2px 0 1px; border-left: 1px solid #dadada; }
.track-y i { display: block; height: 68%; border-radius: 5px; background: #bebebe; }
.canvas { min-width: 0; margin-right: 1px; background: #fff; border-right: 1px solid #b4b4b4; }
.drawing { width: 100%; height: 100%; overflow: hidden; }
.drawing text { font-size: 22px; font-weight: 700; text-anchor: middle; }
.ink text, .headline { fill: #1a1a1a; }
.drawing .headline { font-size: 56px; }
.white { fill: #fff; }
.frame { fill: none; stroke: #0a7ff0; stroke-dasharray: 4 3; }
.handle { fill: #fff; stroke: #0a7ff0; }
.track-x { height: 14px; padding: 1px 211px 0 264px; border: solid #dadada; border-width: 1px 0; margin-right: 13px; }
.track-x i { display: block; height: 10px; border-radius: 5px; background: #bebebe; }
.palette { display: flex; gap: 1px; height: 23px; padding: 0 1px 1px 0; }
.fill { flex: none; width: 46px; color: #454545; }
.chip { flex: 1; height: 22px; }

.rail { display: flex; flex-direction: column; gap: 16px; flex: none; width: 52px; border: solid #c8c8c8; border-width: 0 1px; color: #454545; }
.rail button { height: 50px; }
.rail .expand { height: 31px; padding-top: 16px; color: #888; }
.rail .active { background: #0a80fa; }

.props { flex: none; width: 408px; }
.props h2 { height: 47px; padding-left: 12px; font-size: 20px; line-height: 47px; font-weight: 700; text-align: center; background: #dfdfdf; }
.fields { position: relative; padding: 11px 4px 0 22px; }
.field { display: flex; align-items: center; justify-content: space-between; height: 59px; font-size: 20px; }
.field.slide { height: 42px; margin: 1px 0 9px; }
.kind { width: 120px; font-size: 18px; }
.kind select { padding: 0 5px; }
.spin { display: flex; align-items: center; width: 90px; height: 37px; padding: 0 7px; border: 1px solid #dcdcdc; border-radius: 3px; background: #fff; }
.spin input { flex: 1; min-width: 0; padding: 0; border: 0; outline: 0; background: none; }
.spin span { display: flex; flex-direction: column; gap: 10px; }
.field input[type=checkbox] { width: 19px; height: 19px; margin: 0; appearance: none; border: 1px solid #dcdcdc; background: #fff; }
input[type=range] { appearance: none; height: 18px; margin: 0; background: linear-gradient(#d2d2d2, #d2d2d2) center / 100% 6px no-repeat; }
input[type=range]::-webkit-slider-thumb { appearance: none; width: 18px; height: 18px; border: 3px solid #5ba4ef; border-radius: 50%; background: #fff; }
#gap { width: 270px; margin-left: 7px; }
ul { display: flex; flex-direction: column; gap: 7px; margin: 4px 0 0; padding: 0; list-style: none; }
li { display: flex; align-items: center; gap: 7px; height: 39px; padding: 0 17px 1px 6px; border: 1px solid #dcdcdc; border-radius: 4px; background: #fff; }
li.current { border-color: #5a9fe6; }
li i { width: 24px; height: 24px; border: 1px solid #d0d0d0; }
li button { margin-left: auto; color: #444; }
.menu { position: absolute; top: 462px; right: 0; display: flex; flex-direction: column; width: 167px; height: 210px; padding: 14px 0 0 32px; border-radius: 4px 0 0 4px; background: #fafafa; box-shadow: -1px 2px 5px #0003; }
.menu button { justify-content: flex-start; gap: 25px; height: 45px; }
.menu svg { color: #484848; }
.menu button:disabled, .menu button:disabled svg { color: #999; }

footer { display: flex; flex: none; align-items: center; height: 51px; padding-bottom: 2px; border: solid #dadada; border-width: 1px 0; color: #000; white-space: nowrap; }
footer svg { color: #454545; }
.page-pick { display: flex; align-items: center; gap: 34px; width: 255px; height: 36px; padding: 0 3px 0 27px; border-right: 1px solid #dadada; }
.page-pick .caret { margin-left: auto; }
footer b { margin-left: 40px; }
.new-page { margin-left: 54px; }
.status { display: flex; gap: 16px; margin-left: auto; }
.show { margin-left: 19px; }
.less { margin: 0 10px 0 16px; }
.zoom { width: 123px; }
.app .zoom { background: linear-gradient(90deg, #bbb 30%, #dcdcdc 30%) center / 100% 6px no-repeat; }
.app .zoom::-webkit-slider-thumb { border-color: #bbb; }
.plus { margin: 0 17px 0 10px; }
footer > .caret { margin-left: 7px; }
.full { margin: 0 11px 0 26px; }
.fit { margin-right: 28px; }
</style>
